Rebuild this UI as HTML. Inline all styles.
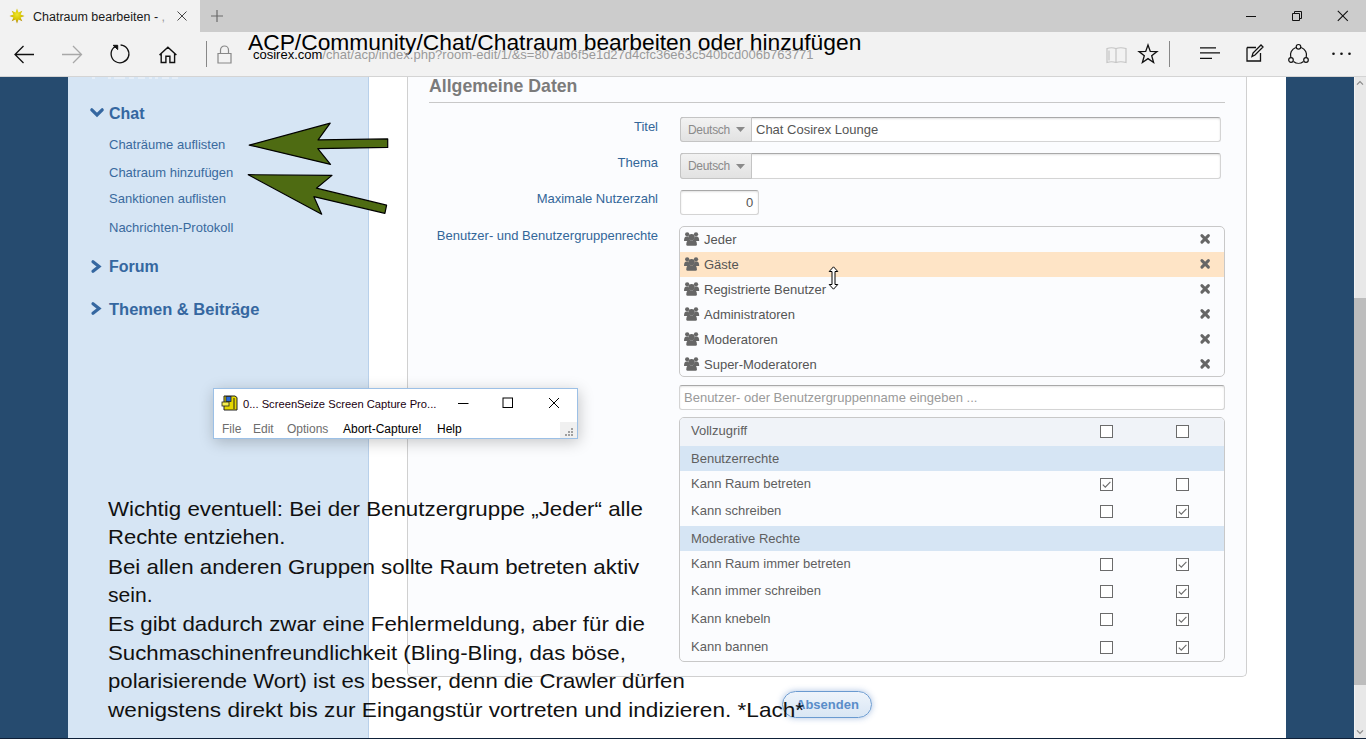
<!DOCTYPE html>
<html><head><meta charset="utf-8">
<style>
*{box-sizing:border-box}
html,body{margin:0;padding:0}
body{width:1366px;height:739px;overflow:hidden;position:relative;background:#fff;font-family:"Liberation Sans",sans-serif}
.a{position:absolute}
.t{position:absolute;white-space:nowrap;line-height:1}
.ov{left:107.8px;font-size:21px;color:#111;transform-origin:0 0;z-index:5}
svg{position:absolute;overflow:visible}
</style></head><body style="-webkit-font-smoothing:antialiased">
<!-- tab bar -->
<div class="a" style="left:0;top:0;width:1366px;height:32px;background:#cccccc"></div>
<div class="a" style="left:0;top:0;width:200px;height:32px;background:#f2f2f2"></div>
<!-- address row -->
<div class="a" style="left:0;top:32px;width:1366px;height:45px;background:#f2f2f2;border-bottom:1px solid #d4d4d4"></div>

<!-- content backgrounds -->
<div class="a" style="left:0;top:77px;width:68px;height:662px;background:#264b6f"></div>
<div class="a" style="left:68px;top:77px;width:301px;height:662px;background:#d6e5f4;border-right:1px solid #b8d0ea"></div>
<div class="a" style="left:1286px;top:77px;width:68px;height:662px;background:#264b6f"></div>
<div class="a" style="left:1354px;top:77px;width:12px;height:662px;background:#e8e8e8"></div>
<div class="a" style="left:1354px;top:77px;width:1px;height:661px;background:#f2f2f2"></div>
<div class="a" style="left:1354px;top:298px;width:12px;height:387px;background:#bdbdbd"></div>
<svg style="left:1356px;top:80px" width="8" height="6"><path d="M1 4.6L4 1.6L7 4.6" stroke="#8a8a8a" stroke-width="1.2" fill="none"/></svg>
<svg style="left:1356px;top:729px" width="8" height="6"><path d="M1 1.4L4 4.4L7 1.4" stroke="#8a8a8a" stroke-width="1.2" fill="none"/></svg>
<div class="a" style="left:0;top:738px;width:1366px;height:1px;background:#0e2038"></div>

<!-- content box -->
<div class="a" style="left:407px;top:77px;width:840px;height:600px;background:#fbfcfe;border:1px solid #d0d0d0;border-top:0;border-radius:0 0 5px 5px"></div>



<!-- sidebar -->
<svg style="left:92px;top:76.5px" width="86" height="2"><path d="M0 1H3 M16 1H19 M22 1H33 M37 1H42 M46 1H53 M57 1H60 M63 1H66 M70 1H77 M80 1H86" stroke="#f4f8fc" stroke-width="1.2"/></svg>

<svg style="left:90px;top:108px" width="14" height="10"><path d="M1.8 1.8L7 7L12.2 1.8" stroke="#3567a0" stroke-width="3.2" fill="none" stroke-linecap="round"/></svg>
<div class="t" style="left:109px;top:106.3px;font-size:16px;font-weight:bold;color:#3567a0">Chat</div>
<div class="t" style="left:109px;top:137.8px;font-size:13px;color:#3a6a9e">Chaträume auflisten</div>
<div class="t" style="left:109px;top:165.7px;font-size:13px;color:#3a6a9e">Chatraum hinzufügen</div>
<div class="t" style="left:109px;top:192.2px;font-size:13px;color:#3a6a9e">Sanktionen auflisten</div>
<div class="t" style="left:109px;top:220.5px;font-size:13px;color:#3a6a9e">Nachrichten-Protokoll</div>
<svg style="left:91px;top:260px" width="11" height="13"><path d="M2 1.8L8 6.5L2 11.2" stroke="#3567a0" stroke-width="3.2" fill="none" stroke-linecap="round"/></svg>
<div class="t" style="left:109px;top:259.2px;font-size:16px;font-weight:bold;color:#3567a0">Forum</div>
<svg style="left:91px;top:302px" width="11" height="13"><path d="M2 1.8L8 6.5L2 11.2" stroke="#3567a0" stroke-width="3.2" fill="none" stroke-linecap="round"/></svg>
<div class="t" style="left:109px;top:301px;font-size:16.5px;font-weight:bold;color:#3567a0">Themen &amp; Beiträge</div>

<!-- arrows -->
<svg style="left:0;top:0" width="1" height="1"><path d="M249.2 145.1L330.2 123.2L318.1 139.9L387.7 138.9L387.7 147.4L317.8 148.7L330.5 164.4Z" fill="#4e6b12" stroke="#000" stroke-width="1.2" stroke-linejoin="round"/><path d="M248.2 174.7L332 175.4L316.4 188.2L386.6 205.2L384.9 213.3L313.9 196.7L321.7 214.2Z" fill="#4e6b12" stroke="#000" stroke-width="1.2" stroke-linejoin="round"/></svg>

<!-- form -->
<div class="t" style="left:429px;top:78.2px;font-size:17.7px;font-weight:bold;color:#7b7b7b">Allgemeine Daten</div>
<div class="a" style="left:429px;top:102px;width:796px;height:1px;background:#c8c8c8"></div>

<div class="t" style="right:708px;top:119.7px;font-size:13px;color:#336699">Titel</div>
<div class="t" style="right:708px;top:155.7px;font-size:13px;color:#336699">Thema</div>
<div class="t" style="right:708px;top:192.4px;font-size:13px;color:#336699">Maximale Nutzerzahl</div>
<div class="t" style="right:708px;top:229px;font-size:13px;color:#336699">Benutzer- und Benutzergruppenrechte</div>


<!-- inputs -->
<div class="a" style="left:680px;top:117px;width:541px;height:25px;background:#fff;border:1px solid #d4d4d4;border-top-color:#a9a9a9;border-radius:3px;box-shadow:inset 0 1px 2px rgba(0,0,0,.12)"></div>
<div class="a" style="left:680px;top:117px;width:72px;height:25px;background:linear-gradient(#f2f2f2,#e2e2e2);border:1px solid #c4c4c4;border-radius:3px 0 0 3px"></div>
<div class="t" style="left:688px;top:123.7px;font-size:12px;letter-spacing:-0.3px;color:#8a8a8a">Deutsch</div>
<svg style="left:736px;top:127px" width="10" height="5"><path d="M0 0H9L4.5 5Z" fill="#8a8a8a"/></svg>
<div class="t" style="left:756px;top:122.9px;font-size:13px;color:#555">Chat Cosirex Lounge</div>

<div class="a" style="left:680px;top:153px;width:541px;height:26px;background:#fff;border:1px solid #d4d4d4;border-top-color:#a9a9a9;border-radius:3px;box-shadow:inset 0 1px 2px rgba(0,0,0,.12)"></div>
<div class="a" style="left:680px;top:153px;width:72px;height:26px;background:linear-gradient(#f2f2f2,#e2e2e2);border:1px solid #c4c4c4;border-radius:3px 0 0 3px"></div>
<div class="t" style="left:688px;top:160.2px;font-size:12px;letter-spacing:-0.3px;color:#8a8a8a">Deutsch</div>
<svg style="left:736px;top:163.5px" width="10" height="5"><path d="M0 0H9L4.5 5Z" fill="#8a8a8a"/></svg>

<div class="a" style="left:680px;top:190px;width:79px;height:25px;background:#fff;border:1px solid #d4d4d4;border-top-color:#a9a9a9;border-radius:3px;box-shadow:inset 0 1px 2px rgba(0,0,0,.12)"></div>
<div class="t" style="left:746px;top:196.2px;font-size:13px;color:#555">0</div>

<!-- group list -->
<div class="a" style="left:679px;top:226px;width:546px;height:151px;background:#fbfcfe;border:1px solid #c8c8c8;border-radius:5px"></div>
<div class="a" style="left:680px;top:252px;width:544px;height:25px;background:#fee4c6"></div>
<svg width="16" height="14" viewBox="0 0 16 14" style="left:684px;top:232px"><g fill="#666"><circle cx="3.2" cy="2.3" r="2.15"/><circle cx="12" cy="2.3" r="2.15"/><path d="M0 9Q0 4.6 2.6 4.6H4.6Q4.8 6.8 6.2 7.8V9Z M15.2 9Q15.2 4.6 12.6 4.6H10.6Q10.4 6.8 9 7.8V9Z"/></g><circle cx="7.6" cy="5.1" r="3.1" fill="#666"/><path d="M2.3 12Q2.3 8.4 5.2 8.2H10Q12.9 8.4 12.9 12V12.6Q12.9 13.8 11.7 13.8H3.5Q2.3 13.8 2.3 12.6Z" fill="#666"/></svg>
<div class="t" style="left:704px;top:233px;font-size:13px;color:#555">Jeder</div>
<svg width="11" height="10" style="left:1200px;top:234px"><path d="M1.9 1.6L8.4 8.1M8.4 1.6L1.9 8.1" stroke="#666" stroke-width="3" stroke-linecap="round"/></svg>
<svg width="16" height="14" viewBox="0 0 16 14" style="left:684px;top:257px"><g fill="#666"><circle cx="3.2" cy="2.3" r="2.15"/><circle cx="12" cy="2.3" r="2.15"/><path d="M0 9Q0 4.6 2.6 4.6H4.6Q4.8 6.8 6.2 7.8V9Z M15.2 9Q15.2 4.6 12.6 4.6H10.6Q10.4 6.8 9 7.8V9Z"/></g><circle cx="7.6" cy="5.1" r="3.1" fill="#666"/><path d="M2.3 12Q2.3 8.4 5.2 8.2H10Q12.9 8.4 12.9 12V12.6Q12.9 13.8 11.7 13.8H3.5Q2.3 13.8 2.3 12.6Z" fill="#666"/></svg>
<div class="t" style="left:704px;top:258px;font-size:13px;color:#555">Gäste</div>
<svg width="11" height="10" style="left:1200px;top:259px"><path d="M1.9 1.6L8.4 8.1M8.4 1.6L1.9 8.1" stroke="#666" stroke-width="3" stroke-linecap="round"/></svg>
<svg width="16" height="14" viewBox="0 0 16 14" style="left:684px;top:282px"><g fill="#666"><circle cx="3.2" cy="2.3" r="2.15"/><circle cx="12" cy="2.3" r="2.15"/><path d="M0 9Q0 4.6 2.6 4.6H4.6Q4.8 6.8 6.2 7.8V9Z M15.2 9Q15.2 4.6 12.6 4.6H10.6Q10.4 6.8 9 7.8V9Z"/></g><circle cx="7.6" cy="5.1" r="3.1" fill="#666"/><path d="M2.3 12Q2.3 8.4 5.2 8.2H10Q12.9 8.4 12.9 12V12.6Q12.9 13.8 11.7 13.8H3.5Q2.3 13.8 2.3 12.6Z" fill="#666"/></svg>
<div class="t" style="left:704px;top:283px;font-size:13px;color:#555">Registrierte Benutzer</div>
<svg width="11" height="10" style="left:1200px;top:284px"><path d="M1.9 1.6L8.4 8.1M8.4 1.6L1.9 8.1" stroke="#666" stroke-width="3" stroke-linecap="round"/></svg>
<svg width="16" height="14" viewBox="0 0 16 14" style="left:684px;top:307px"><g fill="#666"><circle cx="3.2" cy="2.3" r="2.15"/><circle cx="12" cy="2.3" r="2.15"/><path d="M0 9Q0 4.6 2.6 4.6H4.6Q4.8 6.8 6.2 7.8V9Z M15.2 9Q15.2 4.6 12.6 4.6H10.6Q10.4 6.8 9 7.8V9Z"/></g><circle cx="7.6" cy="5.1" r="3.1" fill="#666"/><path d="M2.3 12Q2.3 8.4 5.2 8.2H10Q12.9 8.4 12.9 12V12.6Q12.9 13.8 11.7 13.8H3.5Q2.3 13.8 2.3 12.6Z" fill="#666"/></svg>
<div class="t" style="left:704px;top:308px;font-size:13px;color:#555">Administratoren</div>
<svg width="11" height="10" style="left:1200px;top:309px"><path d="M1.9 1.6L8.4 8.1M8.4 1.6L1.9 8.1" stroke="#666" stroke-width="3" stroke-linecap="round"/></svg>
<svg width="16" height="14" viewBox="0 0 16 14" style="left:684px;top:332px"><g fill="#666"><circle cx="3.2" cy="2.3" r="2.15"/><circle cx="12" cy="2.3" r="2.15"/><path d="M0 9Q0 4.6 2.6 4.6H4.6Q4.8 6.8 6.2 7.8V9Z M15.2 9Q15.2 4.6 12.6 4.6H10.6Q10.4 6.8 9 7.8V9Z"/></g><circle cx="7.6" cy="5.1" r="3.1" fill="#666"/><path d="M2.3 12Q2.3 8.4 5.2 8.2H10Q12.9 8.4 12.9 12V12.6Q12.9 13.8 11.7 13.8H3.5Q2.3 13.8 2.3 12.6Z" fill="#666"/></svg>
<div class="t" style="left:704px;top:333px;font-size:13px;color:#555">Moderatoren</div>
<svg width="11" height="10" style="left:1200px;top:334px"><path d="M1.9 1.6L8.4 8.1M8.4 1.6L1.9 8.1" stroke="#666" stroke-width="3" stroke-linecap="round"/></svg>
<svg width="16" height="14" viewBox="0 0 16 14" style="left:684px;top:357px"><g fill="#666"><circle cx="3.2" cy="2.3" r="2.15"/><circle cx="12" cy="2.3" r="2.15"/><path d="M0 9Q0 4.6 2.6 4.6H4.6Q4.8 6.8 6.2 7.8V9Z M15.2 9Q15.2 4.6 12.6 4.6H10.6Q10.4 6.8 9 7.8V9Z"/></g><circle cx="7.6" cy="5.1" r="3.1" fill="#666"/><path d="M2.3 12Q2.3 8.4 5.2 8.2H10Q12.9 8.4 12.9 12V12.6Q12.9 13.8 11.7 13.8H3.5Q2.3 13.8 2.3 12.6Z" fill="#666"/></svg>
<div class="t" style="left:704px;top:358px;font-size:13px;color:#555">Super-Moderatoren</div>
<svg width="11" height="10" style="left:1200px;top:359px"><path d="M1.9 1.6L8.4 8.1M8.4 1.6L1.9 8.1" stroke="#666" stroke-width="3" stroke-linecap="round"/></svg>

<!-- cursor -->
<svg style="left:828px;top:266px" width="11" height="24"><path d="M5.5 0.8L9.8 5.5H7V18.5H9.8L5.5 23.2L1.2 18.5H4V5.5H1.2Z" fill="#fff" stroke="#000" stroke-width="1"/></svg>

<!-- search -->
<div class="a" style="left:679px;top:385px;width:546px;height:25px;background:#fff;border:1px solid #d4d4d4;border-top-color:#a9a9a9;border-radius:3px;box-shadow:inset 0 1px 2px rgba(0,0,0,.1)"></div>
<div class="t" style="left:684px;top:391px;font-size:13px;color:#9a9a9a">Benutzer- oder Benutzergruppenname eingeben ...</div>


<!-- permissions -->
<div class="a" style="left:679px;top:417px;width:546px;height:245px;background:#fbfcfe;border:1px solid #c8c8c8;border-radius:5px;overflow:hidden"><div class="a" style="left:0;top:0;width:544px;height:28px;background:#f0f3f8"></div><div class="a" style="left:0;top:28px;width:544px;height:25px;background:#d6e5f4"></div><div class="a" style="left:0;top:108px;width:544px;height:25px;background:#d6e5f4"></div></div>
<div class="t" style="left:691px;top:451.5px;font-size:13px;color:#5f5f5f">Benutzerrechte</div>
<div class="t" style="left:691px;top:531.5px;font-size:13px;color:#5f5f5f">Moderative Rechte</div>
<div class="t" style="left:691px;top:424px;font-size:13px;color:#5f5f5f">Vollzugriff</div>
<div class="a" style="left:1100px;top:425px;width:13px;height:13px;border:1.3px solid #6b6b6b;background:#fff"></div><div class="a" style="left:1176px;top:425px;width:13px;height:13px;border:1.3px solid #6b6b6b;background:#fff"></div>
<div class="t" style="left:691px;top:477px;font-size:13px;color:#5f5f5f">Kann Raum betreten</div>
<div class="a" style="left:1100px;top:478px;width:13px;height:13px;border:1.3px solid #6b6b6b;background:#fff"></div><svg style="left:1100px;top:478px" width="13" height="13"><path d="M2.8 6.6L5.3 9.2L10.4 3.8" stroke="#6b6b6b" stroke-width="1.1" fill="none"/></svg><div class="a" style="left:1176px;top:478px;width:13px;height:13px;border:1.3px solid #6b6b6b;background:#fff"></div>
<div class="t" style="left:691px;top:504px;font-size:13px;color:#5f5f5f">Kann schreiben</div>
<div class="a" style="left:1100px;top:505px;width:13px;height:13px;border:1.3px solid #6b6b6b;background:#fff"></div><div class="a" style="left:1176px;top:505px;width:13px;height:13px;border:1.3px solid #6b6b6b;background:#fff"></div><svg style="left:1176px;top:505px" width="13" height="13"><path d="M2.8 6.6L5.3 9.2L10.4 3.8" stroke="#6b6b6b" stroke-width="1.1" fill="none"/></svg>
<div class="t" style="left:691px;top:557px;font-size:13px;color:#5f5f5f">Kann Raum immer betreten</div>
<div class="a" style="left:1100px;top:558px;width:13px;height:13px;border:1.3px solid #6b6b6b;background:#fff"></div><div class="a" style="left:1176px;top:558px;width:13px;height:13px;border:1.3px solid #6b6b6b;background:#fff"></div><svg style="left:1176px;top:558px" width="13" height="13"><path d="M2.8 6.6L5.3 9.2L10.4 3.8" stroke="#6b6b6b" stroke-width="1.1" fill="none"/></svg>
<div class="t" style="left:691px;top:584px;font-size:13px;color:#5f5f5f">Kann immer schreiben</div>
<div class="a" style="left:1100px;top:585px;width:13px;height:13px;border:1.3px solid #6b6b6b;background:#fff"></div><div class="a" style="left:1176px;top:585px;width:13px;height:13px;border:1.3px solid #6b6b6b;background:#fff"></div><svg style="left:1176px;top:585px" width="13" height="13"><path d="M2.8 6.6L5.3 9.2L10.4 3.8" stroke="#6b6b6b" stroke-width="1.1" fill="none"/></svg>
<div class="t" style="left:691px;top:612px;font-size:13px;color:#5f5f5f">Kann knebeln</div>
<div class="a" style="left:1100px;top:613px;width:13px;height:13px;border:1.3px solid #6b6b6b;background:#fff"></div><div class="a" style="left:1176px;top:613px;width:13px;height:13px;border:1.3px solid #6b6b6b;background:#fff"></div><svg style="left:1176px;top:613px" width="13" height="13"><path d="M2.8 6.6L5.3 9.2L10.4 3.8" stroke="#6b6b6b" stroke-width="1.1" fill="none"/></svg>
<div class="t" style="left:691px;top:640px;font-size:13px;color:#5f5f5f">Kann bannen</div>
<div class="a" style="left:1100px;top:641px;width:13px;height:13px;border:1.3px solid #6b6b6b;background:#fff"></div><div class="a" style="left:1176px;top:641px;width:13px;height:13px;border:1.3px solid #6b6b6b;background:#fff"></div><svg style="left:1176px;top:641px" width="13" height="13"><path d="M2.8 6.6L5.3 9.2L10.4 3.8" stroke="#6b6b6b" stroke-width="1.1" fill="none"/></svg>

<!-- overlay text -->
<div class="t ov" style="top:498.1px;transform:scaleX(1.0632)">Wichtig eventuell: Bei der Benutzergruppe „Jeder“ alle</div>
<div class="t ov" style="top:526.4px;transform:scaleX(1.0478)">Rechte entziehen.</div>
<div class="t ov" style="top:555.7px;transform:scaleX(1.0633)">Bei allen anderen Gruppen sollte Raum betreten aktiv</div>
<div class="t ov" style="top:584.2px;transform:scaleX(1.0045)">sein.</div>
<div class="t ov" style="top:613.4px;transform:scaleX(1.0621)">Es gibt dadurch zwar eine Fehlermeldung, aber für die</div>
<div class="t ov" style="top:641.5px;transform:scaleX(1.0587)">Suchmaschinenfreundlichkeit (Bling-Bling, das böse,</div>
<div class="t ov" style="top:670.1px;transform:scaleX(1.0543)">polarisierende Wort) ist es besser, denn die Crawler dürfen</div>
<div class="t ov" style="top:698.6px;transform:scaleX(1.0765)">wenigstens direkt bis zur Eingangstür vortreten und indizieren. *Lach*</div>
<!-- Absenden button -->
<div class="a" style="left:782px;top:691px;width:90px;height:27px;border:1px solid #6a9ad0;border-radius:14px;background:linear-gradient(#eef4fb,#d9e6f4);box-shadow:0 0 6px rgba(70,120,190,.45)"></div>
<div class="t" style="left:796px;top:698px;font-size:13px;font-weight:bold;color:#5a8dc9">Absenden</div>

<!-- ScreenSeize window -->
<div class="a" style="left:213px;top:388px;width:365px;height:51px;background:#fff;border:1px solid #9cc0e6;box-shadow:1px 3px 14px rgba(0,0,0,.22)"></div>
<div class="a" style="left:560px;top:422px;width:17px;height:16px;background:#f0f0f0"></div>
<svg style="left:563px;top:427px" width="12" height="10"><g fill="#a0a0a0"><rect x="8" y="1" width="2" height="2"/><rect x="5" y="4" width="2" height="2"/><rect x="8" y="4" width="2" height="2"/><rect x="2" y="7" width="2" height="2"/><rect x="5" y="7" width="2" height="2"/><rect x="8" y="7" width="2" height="2"/></g></svg>
<svg style="left:221px;top:395px" width="17" height="16"><path d="M3 1H14L16 2.5V15H3Z" fill="#e6d800" stroke="#222" stroke-width="1"/><rect x="5" y="1.5" width="5" height="5" fill="#2a6ad8" stroke="#222" stroke-width="0.8"/><rect x="1" y="7" width="7" height="4" fill="#f5ee50" stroke="#222" stroke-width="0.8"/><path d="M13 3V14" stroke="#222" stroke-width="1"/></svg>
<div class="t" style="left:243px;top:398.5px;font-size:11.2px;color:#1a0010">0... ScreenSeize Screen Capture Pro...</div>
<svg style="left:458px;top:403px" width="11" height="1"><path d="M0 0.5H10.5" stroke="#000" stroke-width="1"/></svg>
<svg style="left:502px;top:397px" width="12" height="12"><rect x="1" y="1" width="9.5" height="9.5" stroke="#000" stroke-width="1" fill="none"/></svg>
<svg style="left:548px;top:397px" width="12" height="12"><path d="M1 1L11 11M11 1L1 11" stroke="#000" stroke-width="1"/></svg>
<div class="t" style="left:222px;top:422.5px;font-size:12px;color:#6d6d6d">File</div>
<div class="t" style="left:253px;top:422.5px;font-size:12px;color:#6d6d6d">Edit</div>
<div class="t" style="left:287px;top:422.5px;font-size:12px;color:#6d6d6d">Options</div>
<div class="t" style="left:343px;top:422.5px;font-size:12px;color:#000">Abort-Capture!</div>
<div class="t" style="left:437px;top:422.5px;font-size:12px;color:#000">Help</div>

<!-- browser chrome -->
<svg style="left:9px;top:8px" width="16" height="16" viewBox="0 0 16 16"><defs><radialGradient id="sg" cx="50%" cy="40%" r="60%"><stop offset="0" stop-color="#eee62a"/><stop offset="0.55" stop-color="#d6c400"/><stop offset="1" stop-color="#a8700c"/></radialGradient></defs><polygon points="8,0.5 9.5,4.4 13.3,2.7 11.6,6.5 15.5,8 11.6,9.5 13.3,13.3 9.5,11.6 8,15.5 6.5,11.6 2.7,13.3 4.4,9.5 0.5,8 4.4,6.5 2.7,2.7 6.5,4.4" fill="url(#sg)"/></svg>
<div class="t" style="left:33px;top:11.1px;font-size:12.5px;color:#1a1a1a">Chatraum bearbeiten - <span style="color:#999">,</span></div>
<svg style="left:177px;top:11px" width="10" height="10"><path d="M0.5 0.5L9.5 9.5M9.5 0.5L0.5 9.5" stroke="#333" stroke-width="0.9"/></svg>
<svg style="left:211px;top:10px" width="12" height="12"><path d="M6 0V12M0 6H12" stroke="#6a6a6a" stroke-width="1.2"/></svg>
<svg style="left:1246px;top:16px" width="11" height="1"><path d="M0 0.5H10" stroke="#111" stroke-width="1"/></svg>
<svg style="left:1291px;top:10px" width="12" height="12"><path d="M1.5 3.5H8.5V10.5H1.5Z M3.5 3.5V1.5H10.5V8.5H8.5" stroke="#111" stroke-width="1" fill="none"/></svg>
<svg style="left:1337px;top:10px" width="12" height="12"><path d="M0.8 0.8L10.8 10.8M10.8 0.8L0.8 10.8" stroke="#111" stroke-width="1.1"/></svg>

<svg style="left:14px;top:45px" width="21" height="19"><path d="M1 9.5H20 M9.5 1L1 9.5L9.5 18" stroke="#111" stroke-width="1.3" fill="none"/></svg>
<svg style="left:62px;top:45px" width="21" height="19"><path d="M0 9.5H19.5 M11 1L19.5 9.5L11 18" stroke="#a8a8a8" stroke-width="1.3" fill="none"/></svg>
<svg style="left:110px;top:44px" width="20" height="20"><path d="M10.6 1A8.9 8.9 0 1 1 3.7 3.6L6.8 1.9" stroke="#111" stroke-width="1.3" fill="none"/><path d="M3.2 1.3H7.7V5.6Z" stroke="#111" stroke-width="1" fill="#111" stroke-linejoin="miter"/></svg>
<svg style="left:159px;top:45.5px" width="19" height="18"><path d="M0.5 9L8.9 1.2L17.4 9 M2.2 7.4V16.5H6.9V10.2H10.9V16.5H15.6V7.4" stroke="#111" stroke-width="1.4" fill="none"/></svg>
<div class="a" style="left:206px;top:41px;width:1px;height:26px;background:#888"></div>
<svg style="left:217px;top:45px" width="15" height="19"><path d="M3.5 8V5A4 4 0 0 1 11.5 5V8 M1 8.5H14V18H1Z" stroke="#888" stroke-width="1.2" fill="none"/></svg>
<div class="t" style="left:248px;top:31.2px;font-size:22.8px;color:#000">ACP/Community/Chat/Chatraum bearbeiten oder hinzufügen</div>
<div class="t" style="left:253px;top:47.5px;font-size:13px;color:#000">cosirex.com<span style="color:#9a9a9a">/chat/acp/index.php?room-edit/1/&amp;s=807ab6f5e1d27d4cfc36e63c540bcd006b763771</span></div>

<svg style="left:1106px;top:46px" width="21" height="18"><path d="M1 2.5Q5.5 1 10 2.5Q14.5 1 20 2.5V16.5Q14.5 15 10 16.5Q5.5 15 1 16.5Z M10 2.5V16.5 M3 4.5V14.5" stroke="#c4c4c4" stroke-width="1.2" fill="none"/></svg>
<svg style="left:1138px;top:44px" width="20" height="20"><polygon points="10,1 12.3,7.4 19,7.6 13.7,11.8 15.6,18.5 10,14.6 4.4,18.5 6.3,11.8 1,7.6 7.7,7.4" stroke="#111" stroke-width="1.3" fill="none"/></svg>
<div class="a" style="left:1169px;top:41px;width:1px;height:26px;background:#888"></div>
<svg style="left:1200px;top:46px" width="21" height="14"><path d="M0 1.8H16 M0 6.8H20 M0 12.3H12" stroke="#111" stroke-width="1.3"/></svg>
<svg style="left:1246px;top:44px" width="18" height="18"><path d="M1 3.5V17H14.5V9 M10 3.5H1 M6 12.5L7 9L15 1L17 3L9 11Z" stroke="#111" stroke-width="1.3" fill="none"/></svg>
<svg style="left:1288px;top:44px" width="21" height="20"><path d="M7.8 3.5A8 8 0 0 0 2.8 13.5 M13.2 3.5A8 8 0 0 1 18.2 13.5 M5.5 17.5A8 8 0 0 0 15.5 17.5" stroke="#111" stroke-width="1.2" fill="none"/><circle cx="10.5" cy="2.8" r="2.3" stroke="#111" stroke-width="1.2" fill="#f2f2f2"/><circle cx="3" cy="16" r="2.3" stroke="#111" stroke-width="1.2" fill="#f2f2f2"/><circle cx="18" cy="16" r="2.3" stroke="#111" stroke-width="1.2" fill="#f2f2f2"/></svg>
<svg style="left:1332px;top:52px" width="20" height="4"><circle cx="1.5" cy="1.8" r="1.3" fill="#111"/><circle cx="9.5" cy="1.8" r="1.3" fill="#111"/><circle cx="17.5" cy="1.8" r="1.3" fill="#111"/></svg>

</body></html>
